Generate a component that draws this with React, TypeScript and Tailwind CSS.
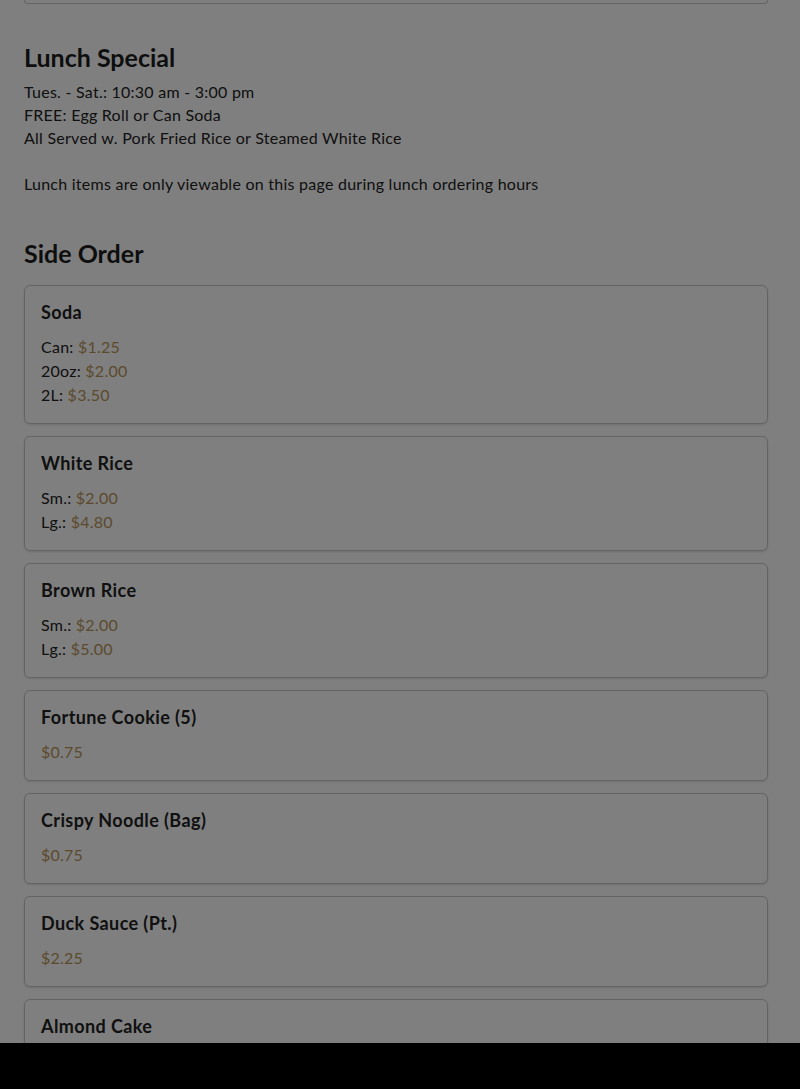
type Price = { label?: string; price: string };
type Item = { name: string; prices: Price[] };

const sides: Item[] = [
  { name: "Soda", prices: [{ label: "Can", price: "$1.25" }, { label: "20oz", price: "$2.00" }, { label: "2L", price: "$3.50" }] },
  { name: "White Rice", prices: [{ label: "Sm.", price: "$2.00" }, { label: "Lg.", price: "$4.80" }] },
  { name: "Brown Rice", prices: [{ label: "Sm.", price: "$2.00" }, { label: "Lg.", price: "$5.00" }] },
  { name: "Fortune Cookie (5)", prices: [{ price: "$0.75" }] },
  { name: "Crispy Noodle (Bag)", prices: [{ price: "$0.75" }] },
  { name: "Duck Sauce (Pt.)", prices: [{ price: "$2.25" }] },
  { name: "Almond Cake", prices: [{ price: "$1.50" }] },
];

function MenuCard({ item }: { item: Item }) {
  return (
    <div className="rounded-md border border-[#c9c9c9] bg-white p-4 shadow-sm">
      <h3 className="text-lg leading-5 font-bold tracking-[0.4px] text-[#222]">{item.name}</h3>
      <div className="mt-[13px]">
        {item.prices.map((p, i) => (
          <div key={i} className="leading-6 tracking-[0.25px] text-[#222]">
            {p.label && <span>{p.label}: </span>}
            <span className="text-[#b8955a]">{p.price}</span>
          </div>
        ))}
      </div>
    </div>
  );
}

export default function App() {
  return (
    <div className="min-h-screen bg-white font-['Lato','Noto_Sans',sans-serif] text-[#222]">
      <div className="pl-6 pr-8">
        <div className="h-[4px] rounded-b-md border border-t-0 border-[#c9c9c9]" />

        {/* lunch special */}
        <section className="pt-[37px]">
          <h2 className="text-[25px] leading-8 font-bold text-[#1c1c1c]">Lunch Special</h2>
          <div className="mt-[7px] text-base leading-[23px] tracking-[0.25px]">
            <p>Tues. - Sat.: 10:30 am - 3:00 pm</p>
            <p>FREE: Egg Roll or Can Soda</p>
            <p>All Served w. Pork Fried Rice or Steamed White Rice</p>
            <p className="mt-[23px]">Lunch items are only viewable on this page during lunch ordering hours</p>
          </div>
        </section>

        {/* side order */}
        <section className="pt-[42px] pb-20">
          <h2 className="text-[25px] leading-8 font-bold text-[#1c1c1c]">Side Order</h2>
          <div className="mt-[16px] flex flex-col gap-3">
            {sides.map((s) => (
              <MenuCard key={s.name} item={s} />
            ))}
          </div>
        </section>
      </div>

      <div className="fixed inset-0 bg-black/50" />
      <div className="fixed inset-x-0 bottom-0 h-[46px] bg-black" />
    </div>
  );
}
